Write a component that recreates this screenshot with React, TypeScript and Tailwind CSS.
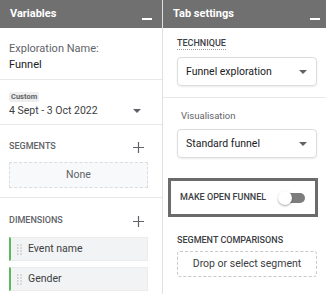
import React from 'react'

function Caret() {
  return <div className="w-0 h-0 border-l-[4px] border-r-[4px] border-t-[4px] border-l-transparent border-r-transparent border-t-[#5f6368]" />
}

function Plus() {
  return (
    <svg width="11" height="11" viewBox="0 0 11 11" className="text-[#5f6368]">
      <path d="M5.5 0v11M0 5.5h11" stroke="currentColor" strokeWidth="1.2" />
    </svg>
  )
}

function Dots() {
  return (
    <svg width="5" height="11" viewBox="0 0 5 11" className="text-[#bdbdbd]">
      {[1, 4, 7, 10].map(y => (
        <g key={y}>
          <rect x="0" y={y - 0.7} width="1.4" height="1.4" fill="currentColor" />
          <rect x="3.3" y={y - 0.7} width="1.4" height="1.4" fill="currentColor" />
        </g>
      ))}
    </svg>
  )
}

function Header({ title, right }: { title: string; right: string }) {
  return (
    <div className={`h-[28px] bg-[#707070] flex items-center justify-between pl-[10px] ${right}`}>
      <span className="text-white font-bold text-[11px]">{title}</span>
      <div className="w-[10px] h-[2px] bg-white mt-[9px]" />
    </div>
  )
}

function Select({ label }: { label: string }) {
  return (
    <div className="h-[29px] border border-[#dadce0] rounded-[4px] shadow-[0_1px_2px_rgba(0,0,0,0.08)] flex items-center justify-between pl-[8px] pr-[9px] text-[10.5px] text-[#202124]">
      <span>{label}</span>
      <Caret />
    </div>
  )
}

export default function App() {
  return (
    <div className="w-[326px] h-[294px] bg-white flex overflow-hidden" style={{ fontFamily: 'Roboto, "Noto Sans", sans-serif' }}>
      {/* Variables column */}
      <div className="w-[163px] shrink-0 border-r border-[#e0e0e0] flex flex-col">
        <Header title="Variables" right="pr-[10px]" />

        <div className="h-[52px] border-b border-[#e8e8e8] px-[9px] pt-[13px] text-[11px] leading-[16px]">
          <div className="text-[#5f6368]">Exploration Name:</div>
          <div className="text-[#202124]">Funnel</div>
        </div>

        <div className="h-[45px] border-b border-[#e8e8e8] px-[9px] pt-[12px]">
          <div className="w-fit bg-[#eeeeee] text-[#5f6368] font-bold text-[7.5px] leading-[10px] px-[2px] rounded-[2px]">Custom</div>
          <div className="mt-[1px] flex items-center justify-between pr-[12px] text-[10.5px] leading-[16px] text-[#3c4043]">
            <span>4 Sept - 3 Oct 2022</span>
            <Caret />
          </div>
        </div>

        <div className="h-[73px] border-b border-[#e8e8e8] px-[9px] pt-[15px]">
          <div className="flex items-center justify-between pr-[9px] h-[14px]">
            <span className="text-[9px] font-medium text-[#5f6368]">SEGMENTS</span>
            <Plus />
          </div>
          <div className="mt-[8px] h-[26px] mr-[5px] border border-dashed border-[#dadce0] bg-[#f8f9fa] flex items-center justify-center text-[10.5px] text-[#5f6368]">
            None
          </div>
        </div>

        <div className="px-[9px] pt-[16px]">
          <div className="flex items-center justify-between pr-[9px] h-[14px]">
            <span className="text-[9px] font-medium text-[#5f6368]">DIMENSIONS</span>
            <Plus />
          </div>
          <div className="mt-[9px] flex flex-col gap-[6px] mr-[5px]">
            {['Event name', 'Gender'].map(name => (
              <div key={name} className="h-[24px] bg-[#f1f3f4] border border-[#ebebeb] border-l-2 border-l-[#5cb85c] flex items-center gap-[6px] pl-[6px] text-[10.5px] text-[#3c4043]">
                <Dots />
                <span>{name}</span>
              </div>
            ))}
          </div>
        </div>
      </div>

      {/* Tab settings column */}
      <div className="flex-1 flex flex-col">
        <Header title="Tab settings" right="pr-[6px]" />
        <div className="pl-[14px] pr-[9px] pt-[9px] pb-[11px] border-b border-[#e8e8e8]">
          <div className="w-fit text-[9px] font-medium text-[#3c4043] border-b border-dotted border-[#9e9e9e] leading-[12px]">TECHNIQUE</div>
          <div className="mt-[7px]">
            <Select label="Funnel exploration" />
          </div>
        </div>
        <div className="pl-[14px] pr-[9px] pt-[12px]">
          <div className="pl-[4px] text-[9.5px] text-[#5f6368] leading-[12px]">Visualisation</div>
          <div className="mt-[7px]">
            <Select label="Standard funnel" />
          </div>
        </div>

        <div className="mt-[20px] ml-[5px] mr-[8px] h-[39px] border-[3px] border-[#6b6b6b] flex items-center justify-between pl-[9px] pr-[10px]">
          <span className="text-[9px] font-medium text-[#3c4043]">MAKE OPEN FUNNEL</span>
          <div className="relative w-[27px] h-[14px]">
            <div className="absolute right-0 top-[2px] w-[22px] h-[10px] rounded-full bg-[#7d7d7d]" />
            <div className="absolute left-0 top-0 w-[14px] h-[14px] rounded-full bg-white shadow-[0_1px_2px_rgba(0,0,0,0.35)]" />
          </div>
        </div>

        <div className="pl-[14px] pr-[9px] pt-[17px]">
          <div className="text-[9px] font-medium text-[#3c4043] leading-[12px]">SEGMENT COMPARISONS</div>
          <div className="mt-[5px] h-[26px] border border-dashed border-[#c8c8c8] rounded-[3px] flex items-center justify-center text-[10.5px] text-[#3c4043]">
            Drop or select segment
          </div>
        </div>
      </div>
    </div>
  )
}
